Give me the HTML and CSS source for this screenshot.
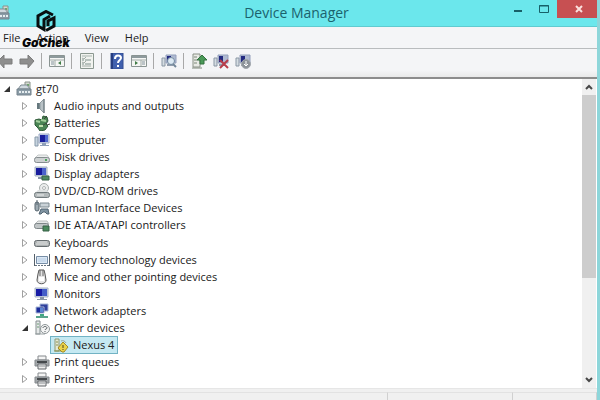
FILE: index.html
```html
<!DOCTYPE html>
<html lang="en">
<head>
<meta charset="utf-8">
<title>Device Manager</title>
<link rel="stylesheet" href="styles.css">
</head>
<body>
<svg class="defs" aria-hidden="true">
  <symbol id="closed" viewBox="0 0 8 10"><path d="M1.500 1.500 6 5 1.500 8.500z" fill="#fff" stroke="#a0a0a0"/></symbol>
  <symbol id="open" viewBox="0 0 8 10"><path d="M7 2v6H1z" fill="#333"/></symbol>
  <symbol id="root" viewBox="0 0 16 16"><path d="M9 1h5v9H9z" fill="#d4d9d0" stroke="#8a938c"/><path d="M11 3h2v2h-2z" fill="#6fa56c"/><path d="M2 8 5 4h6l3 4z" fill="#cfd8de" stroke="#7e8b93"/><path d="M1 8h14v6H1z" fill="#8b9ca7" stroke="#74838d"/><path d="M3 11h2m1 0h2m1 0h2m1 0h2" stroke="#e6edf0" stroke-width="2"/></symbol>
  <symbol id="audio" viewBox="0 0 16 16"><path d="M3 5h3v6H3z" fill="#66787e"/><path d="M6 5l4-4v14l-4-4z" fill="#b9c2c6" stroke="#8f9b9f"/><path d="M10 1v14" stroke="#66747a"/></symbol>
  <symbol id="battery" viewBox="0 0 16 16"><path d="M1 5l4-1 3 1 1-4 4 1 1 4-2 3 2 2-3 4-5 1-2-3-3-3z" fill="#4a8554" stroke="#2f5a38"/><path d="M2 6l4 1M7 5l5 1" stroke="#a3cf9c" stroke-width="2"/><path d="M7 11l6-3M10 4l3-3M13 10l3-1" stroke="#39453a" stroke-width="1"/><path d="M5 11h4" stroke="#c2dfae" stroke-width="2"/></symbol>
  <symbol id="computer" viewBox="0 0 16 16"><path d="M1 5h3v9H1z" fill="#c7d4df" stroke="#8799aa"/><path d="M5 2h10v9H5z" fill="#d5ddee" stroke="#9ba9c5"/><path d="M6 3h5v7H6z" fill="#1a1f9c"/><path d="M11 3h3v7h-3z" fill="#4f68cf"/><path d="M8 11h4v2h3v1H6v-1h2z" fill="#8e9fb8"/></symbol>
  <symbol id="disk" viewBox="0 0 16 16"><path d="M1 9l3-3h9l2 3z" fill="#eceeee" stroke="#c4c8c8"/><rect x=".5" y="8.500" width="15" height="5" rx="2" fill="#cdd1d2" stroke="#868d90"/><path d="M11 11h2" stroke="#4fa55e" stroke-width="2"/></symbol>
  <symbol id="display" viewBox="0 0 16 16"><path d="M1 1h12v9H1z" fill="#cbd5e5" stroke="#a1aebf"/><path d="M2 2h6v7H2z" fill="#171b9c"/><path d="M8 2h4v7H8z" fill="#4c63cc"/><path d="M4 12h5" stroke="#8897a8" stroke-width="2"/><path d="M8 10h7v4H8z" fill="#4f8a61" stroke="#376147"/></symbol>
  <symbol id="dvd" viewBox="0 0 16 16"><circle cx="10" cy="5" r="4.500" fill="#eceeed" stroke="#a7adad"/><circle cx="10" cy="5" r="1.500" fill="#fff" stroke="#b0b5b5"/><path d="M1 10l3-3h9l2 3z" fill="#dfe2e2"/><rect x=".5" y="9.500" width="15" height="5" rx="2" fill="#b3b9ba" stroke="#717a7d"/><path d="M3 12h7" stroke="#eef0f0"/></symbol>
  <symbol id="hid" viewBox="0 0 16 16"><rect x="1" y="2" width="4" height="9" rx="2" fill="#9eabb2" stroke="#56656f"/><path d="M3 0v5" stroke="#56656f"/><path d="M6 3h9v4H6z" fill="#cbd3d8" stroke="#7c8990"/><path d="M7 9h7l1 5h-2l-2-2H9l-2 2H5z" fill="#7f93a1" stroke="#526572"/></symbol>
  <symbol id="ide" viewBox="0 0 16 16"><path d="M1 7l3-3h9l2 3z" fill="#e6e8e8" stroke="#b8bcbc"/><rect x=".5" y="6.500" width="14" height="5" rx="2" fill="#c0c5c6" stroke="#7f8789"/><path d="M9 9h6v5H9z" fill="#4b8a5d" stroke="#376147"/></symbol>
  <symbol id="keyboard" viewBox="0 0 16 16"><rect x=".5" y="5.500" width="15" height="6" rx="2" fill="#aeb2b3" stroke="#666d70"/><path d="M3 7h10M2 9h12" stroke="#e4e6e6"/></symbol>
  <symbol id="memory" viewBox="0 0 16 16"><path d="M.5 2v12M15.500 2v12" stroke="#55606b"/><path d="M2.500 4.500h11v7h-11z" fill="#dbe8f5" stroke="#778ea7"/><path d="M4 6h8v4H4z" fill="#c9daec"/><path d="M1 13.500h14" stroke="#65727f" stroke-dasharray="2 1"/></symbol>
  <symbol id="mouse" viewBox="0 0 16 16"><path d="M5 1h5l1 4 1 6c0 5-9 5-9 0l1-6z" fill="#e4e4e4" stroke="#555"/><path d="M6 1v6M9 1v6" stroke="#666"/><path d="M5 8h5v4H5z" fill="#fff"/></symbol>
  <symbol id="monitor" viewBox="0 0 16 16"><path d="M1 2h13v9H1z" fill="#ccd6e5" stroke="#a6b2c4"/><path d="M2 3h6v7H2z" fill="#171ba5"/><path d="M8 3h5v7H8z" fill="#435dc8"/><path d="M6 11h4v2h3v1H3v-1h3z" fill="#8996a6"/></symbol>
  <symbol id="network" viewBox="0 0 16 16"><path d="M6 1h8v7H6z" fill="#30419d" stroke="#a9b8d8"/><path d="M2 4h8v6H2z" fill="#1b2c9a" stroke="#a9b8d8"/><path d="M6 5h3v4H6z" fill="#5b86d4"/><path d="M6 11h4v3H6z" fill="#3fa681"/><path d="M2 14h12" stroke="#59a58c" stroke-width="2"/></symbol>
  <symbol id="other" viewBox="0 0 16 16"><path d="M2 1h4v13H2z" fill="#e6e9e9" stroke="#858e90"/><path d="M3 4h2m-2 3h2" stroke="#6b9a72"/><path d="M1 14h10" stroke="#9ba3a5"/><circle cx="11" cy="9" r="4.500" fill="#f4f5f5" stroke="#8e9698"/><path d="M9 8c0-2 4-2 4 0 0 1-2 1-2 2m0 1v1" fill="none" stroke="#555d60"/></symbol>
  <symbol id="warning" viewBox="0 0 16 16"><path d="M2 2h4v12H2z" fill="#e3e9d5" stroke="#8f9874"/><path d="M3 5h2m-2 3h2M1 14h8" stroke="#87914f"/><path d="M8 4c2-1 4 0 5 2" fill="none" stroke="#9ba6a0"/><path d="M10 5l5 5-4 5H9l-4-4z" fill="#ead34b" stroke="#a48b25"/><path d="M10 8v3m0 1v1" stroke="#4d4520"/></symbol>
  <symbol id="printer" viewBox="0 0 16 16"><path d="M4 2h8v4H4z" fill="#f4f4f4" stroke="#85898c"/><path d="M1 6h14v6H1z" fill="#a4a8ab" stroke="#84898d"/><path d="M3 8h10" stroke="#45494c" stroke-width="2"/><path d="M4 10h8v5H4z" fill="#eee" stroke="#62676a"/><path d="M5 12h6" stroke="#8b9094"/></symbol>
  <symbol id="arrow" viewBox="0 0 16 16"><path d="M1 8l6-6v4h8v5H7v4z" fill="#8e8e8e" stroke="#7c7c7c"/></symbol>
  <symbol id="panel" viewBox="0 0 16 16"><path d="M.5 2.500h15v11H.5z" fill="#f5f6f4" stroke="#8a9492"/><path d="M1 4h14" stroke="#8e9a9c" stroke-width="2"/><path d="M1 7h14M6 7v6" stroke="#a2aba8"/><path d="M2 9h3m-3 2h3" stroke="#82919a"/><path d="M12 8v4L9 10z" fill="#3f7b46"/></symbol>
  <symbol id="panelright" viewBox="0 0 16 16"><path d="M.5 2.500h15v11H.5z" fill="#f5f6f4" stroke="#8a9492"/><path d="M1 4h14" stroke="#8e9a9c" stroke-width="2"/><path d="M1 7h14M10 7v6" stroke="#a2aba8"/><path d="M11 9h3m-3 2h3" stroke="#82919a"/><path d="M4 8v4l3-2z" fill="#3f7b46"/></symbol>
  <symbol id="props" viewBox="0 0 16 16"><path d="M1.500.5h13v15h-13z" fill="#f1f3ef" stroke="#8b9890"/><path d="M3 3h10" stroke="#a7b3ad"/><path d="M3 7h2m1 0h6M3 11h2m1 0h6" stroke="#7f918b"/><path d="M3 5l2 1 2-2M3 9l2 1 2-2M3 13h9" fill="none" stroke="#a2aca6"/></symbol>
  <symbol id="help" viewBox="0 0 16 16"><path d="M2 0h12v16H2z" fill="#4060ae" stroke="#334d90"/><path d="M3 0v16" stroke="#263d80" stroke-width="2"/><path d="M6 6c0-5 6-4 6-1 0 2-3 2-3 5m0 2v2" fill="none" stroke="#fff" stroke-width="2"/></symbol>
  <symbol id="pc" viewBox="0 0 16 16"><path d="M1 5h3v8H1z" fill="#d4dce2" stroke="#8a97a4"/><path d="M5 2h10v8H5z" fill="#afbad1" stroke="#939fbb"/><path d="M6 3h4v6H6z" fill="#232a80"/><path d="M6 12h6" stroke="#909cac" stroke-width="2"/></symbol>
  <symbol id="scan" viewBox="0 0 16 16"><use href="#pc"/><circle cx="10" cy="8" r="3.500" fill="#dce9f3" stroke="#748ba0"/><path d="M12 11l3 3" stroke="#73879a" stroke-width="2"/></symbol>
  <symbol id="update" viewBox="0 0 16 16"><path d="M2 1h7v13H2z" fill="#e8eae5" stroke="#8a9186"/><path d="M3 4h3m-3 3h3m-3 3h3M1 15h10" stroke="#7e887b"/><path d="M11 2l5 5h-3v4H9V7H6z" fill="#4a9958" stroke="#32713e"/></symbol>
  <symbol id="remove" viewBox="0 0 16 16"><use href="#pc"/><path d="M7 7l8 8m0-8l-8 8" stroke="#b83d4a" stroke-width="2"/></symbol>
  <symbol id="disable" viewBox="0 0 16 16"><use href="#pc"/><circle cx="11" cy="11" r="4.500" fill="#8d9399" stroke="#a3a9ae"/><path d="M11 8v5m-2-2l2 2 2-2" fill="none" stroke="#fff"/></symbol>
</svg>
<div class="window">
  <header class="titlebar">
    <svg class="icon title-icon" aria-hidden="true"><use href="#root"/></svg>
    <h1>Device Manager</h1>
    <div class="controls">
      <button class="control" aria-label="Minimize"><svg viewBox="0 0 10 10"><path d="M1 7h8" stroke="#176068" stroke-width="2"/></svg></button>
      <button class="control" aria-label="Maximize"><svg viewBox="0 0 10 10"><path d="M.5 1.500h9v7h-9zM0 2h10" fill="none" stroke="#176068"/></svg></button>
      <button class="control close" aria-label="Close"><svg viewBox="0 0 10 10"><path d="M2 2l6 6m0-6l-6 6" stroke="#fbe0dd" stroke-width="2"/></svg></button>
    </div>
  </header>
  <div class="brand">
    <svg viewBox="0 0 20 22" aria-hidden="true"><path d="M17 5 10 1.500 2 6v10l6 3.500V9.500L14 6" fill="none" stroke="#080f10" stroke-width="3"/><path d="M10 20.500 18 16V8l-6 3v5" fill="none" stroke="#080f10" stroke-width="3"/></svg>
    <span>GoChek</span>
  </div>
  <nav class="menubar"><button>File</button><button>Action</button><button>View</button><button>Help</button></nav>
  <div class="toolbar" role="toolbar" aria-label="Tools">
    <div class="group history"><button aria-label="Back"><svg class="icon"><use href="#arrow"/></svg></button><button aria-label="Forward"><svg class="icon flip"><use href="#arrow"/></svg></button></div>
    <div class="group"><button aria-label="Console tree"><svg class="icon"><use href="#panel"/></svg></button></div>
    <div class="group"><button aria-label="Properties"><svg class="icon"><use href="#props"/></svg></button></div>
    <div class="group"><button aria-label="Help topics"><svg class="icon"><use href="#help"/></svg></button><button aria-label="Action pane"><svg class="icon"><use href="#panelright"/></svg></button></div>
    <div class="group"><button aria-label="Scan for changes"><svg class="icon"><use href="#scan"/></svg></button></div>
    <div class="group"><button aria-label="Update driver"><svg class="icon"><use href="#update"/></svg></button><button aria-label="Uninstall"><svg class="icon"><use href="#remove"/></svg></button><button aria-label="Disable"><svg class="icon"><use href="#disable"/></svg></button></div>
  </div>
  <main class="pane">
    <ul class="tree" role="tree" aria-label="Devices">
      <li class="root" role="treeitem" aria-level="1" aria-expanded="true"><svg class="twisty"><use href="#open"/></svg><svg class="icon"><use href="#root"/></svg><span>gt70</span></li>
      <li role="treeitem" aria-level="2"><svg class="twisty"><use href="#closed"/></svg><svg class="icon"><use href="#audio"/></svg><span>Audio inputs and outputs</span></li>
      <li role="treeitem" aria-level="2"><svg class="twisty"><use href="#closed"/></svg><svg class="icon"><use href="#battery"/></svg><span>Batteries</span></li>
      <li role="treeitem" aria-level="2"><svg class="twisty"><use href="#closed"/></svg><svg class="icon"><use href="#computer"/></svg><span>Computer</span></li>
      <li role="treeitem" aria-level="2"><svg class="twisty"><use href="#closed"/></svg><svg class="icon"><use href="#disk"/></svg><span>Disk drives</span></li>
      <li role="treeitem" aria-level="2"><svg class="twisty"><use href="#closed"/></svg><svg class="icon"><use href="#display"/></svg><span>Display adapters</span></li>
      <li role="treeitem" aria-level="2"><svg class="twisty"><use href="#closed"/></svg><svg class="icon"><use href="#dvd"/></svg><span>DVD/CD-ROM drives</span></li>
      <li role="treeitem" aria-level="2"><svg class="twisty"><use href="#closed"/></svg><svg class="icon"><use href="#hid"/></svg><span>Human Interface Devices</span></li>
      <li role="treeitem" aria-level="2"><svg class="twisty"><use href="#closed"/></svg><svg class="icon"><use href="#ide"/></svg><span>IDE ATA/ATAPI controllers</span></li>
      <li role="treeitem" aria-level="2"><svg class="twisty"><use href="#closed"/></svg><svg class="icon"><use href="#keyboard"/></svg><span>Keyboards</span></li>
      <li role="treeitem" aria-level="2"><svg class="twisty"><use href="#closed"/></svg><svg class="icon"><use href="#memory"/></svg><span>Memory technology devices</span></li>
      <li role="treeitem" aria-level="2"><svg class="twisty"><use href="#closed"/></svg><svg class="icon"><use href="#mouse"/></svg><span>Mice and other pointing devices</span></li>
      <li role="treeitem" aria-level="2"><svg class="twisty"><use href="#closed"/></svg><svg class="icon"><use href="#monitor"/></svg><span>Monitors</span></li>
      <li role="treeitem" aria-level="2"><svg class="twisty"><use href="#closed"/></svg><svg class="icon"><use href="#network"/></svg><span>Network adapters</span></li>
      <li role="treeitem" aria-level="2" aria-expanded="true"><svg class="twisty"><use href="#open"/></svg><svg class="icon"><use href="#other"/></svg><span>Other devices</span></li>
      <li class="leaf" role="treeitem" aria-level="3" aria-selected="true"><div class="selected"><svg class="icon"><use href="#warning"/></svg><span>Nexus 4</span></div></li>
      <li role="treeitem" aria-level="2"><svg class="twisty"><use href="#closed"/></svg><svg class="icon"><use href="#printer"/></svg><span>Print queues</span></li>
      <li role="treeitem" aria-level="2"><svg class="twisty"><use href="#closed"/></svg><svg class="icon"><use href="#printer"/></svg><span>Printers</span></li>
    </ul>
    <div class="scrollbar">
      <button aria-label="Scroll up"><svg viewBox="0 0 10 10"><path d="M2 7l3-3 3 3" fill="none" stroke="#484848" stroke-width="2"/></svg></button>
      <div class="track"><div class="thumb"></div></div>
      <button aria-label="Scroll down"><svg viewBox="0 0 10 10"><path d="M2 3l3 3 3-3" fill="none" stroke="#484848" stroke-width="2"/></svg></button>
    </div>
  </main>
  <footer class="statusbar"><div></div><div></div><div></div></footer>
</div>
</body>
</html>
```
FILE: styles.css
```css
* { box-sizing: border-box; }
body { margin: 0; font: 11px/16px "Open Sans", "Noto Sans", sans-serif; color: #202020; }
button { margin: 0; padding: 0; border: 0; background: none; font: inherit; color: inherit; }
svg { display: block; flex: none; }
.defs { position: absolute; width: 0; height: 0; }
.icon { width: 16px; height: 16px; }
.window { position: relative; display: flex; flex-direction: column; height: 100vh; overflow: hidden; border-right: 3px solid #8ed6da; background: #f4f5f7; }

.titlebar { display: grid; grid-template-columns: 1fr auto 1fr; align-items: center; height: 27px; flex: none; margin-right: -3px; background: #6be7ec; border-bottom: 1px solid #60cbd0; }
.title-icon { margin-left: -6px; }
.titlebar h1 { margin: 0; padding-right: 7px; font-size: 14px; line-height: 24px; font-weight: 400; color: #1b626c; }
.controls { display: flex; align-self: start; justify-content: flex-end; }
.control { display: flex; width: 26px; height: 18px; align-items: center; justify-content: center; }
.control svg { width: 10px; height: 10px; }
.close { width: 43px; background: #c75052; }

.brand { position: absolute; left: 22px; top: 10px; display: flex; flex-direction: column; align-items: center; color: #080808; font: italic 900 12px/16px Inter, sans-serif; }
.brand svg { width: 20px; height: 22px; }
.brand span { margin-top: 3px; }

.menubar { display: flex; flex: none; gap: 16px; height: 22px; padding-left: 3px; align-items: center; border-bottom: 1px solid #b9bcbe; }

.toolbar { display: flex; flex: none; align-items: center; height: 30px; padding-bottom: 4px; border-bottom: 2px solid #8c8c8c; background: linear-gradient(#f4f5f7 75%, #e9e9e9); }
.group { display: flex; gap: 6px; padding: 0 6px 0 7px; border-left: 1px solid #a8a8a8; }
.history { margin-left: -10px; border-left: 0; }
.flip { transform: scaleX(-1); }

.pane { display: flex; flex: 1; min-height: 0; background: #fff; }
.tree { display: grid; flex: 1; grid-auto-rows: 1fr; margin: 0; padding: 1px 0 0; list-style: none; }
.tree li { display: flex; align-items: center; min-height: 0; padding-left: 21px; white-space: nowrap; }
.tree .root { padding-left: 3px; }
.tree .leaf { padding-left: 50px; }
.twisty { width: 8px; height: 10px; margin-right: 5px; }
.tree .icon { margin-right: 4px; }
.selected { display: flex; align-items: center; height: 18px; padding: 0 3px 0 2px; border: 1px solid #72b3c4; background: #c5e9f2; }
.scrollbar { display: flex; flex-direction: column; width: 14px; margin-right: 1px; background: #f0f0f0; }
.scrollbar button { display: flex; height: 16px; align-items: center; justify-content: center; }
.scrollbar button svg { width: 10px; height: 10px; }
.track { flex: 1; }
.thumb { height: 66%; background: #cdcdcd; }

.statusbar { display: grid; flex: none; grid-template-columns: 65% 21% 1fr; height: 12px; padding-top: 3px; background: #f0f0f0; border-top: 1px solid #e6e6e6; }
.statusbar div { border-right: 1px solid #d0d0d0; border-top: 1px solid #e2e2e2; }
```
